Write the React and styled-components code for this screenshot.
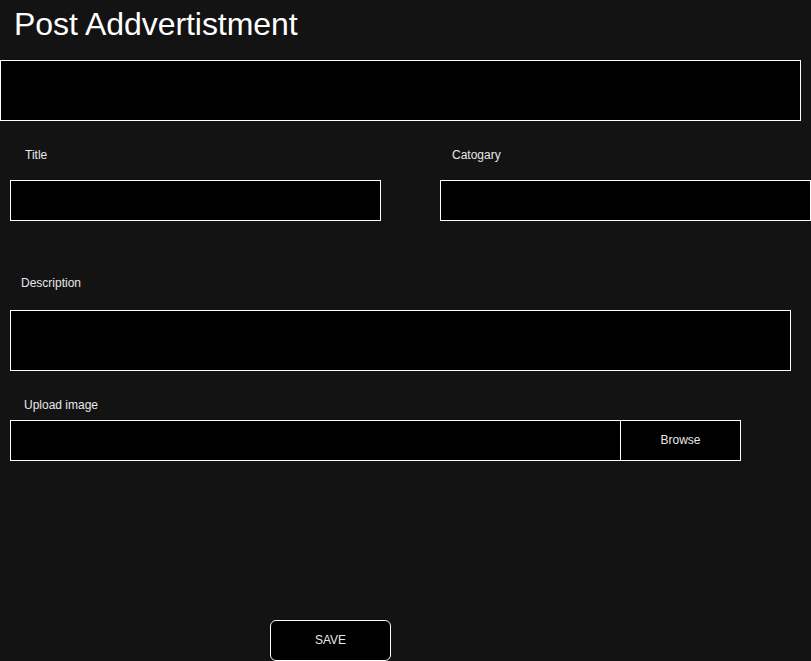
import React from "react";
import styled, { createGlobalStyle } from "styled-components";

const Global = createGlobalStyle`
  html, body {
    margin: 0;
    padding: 0;
    background: #131313;
  }
  body {
    font-family: "Liberation Sans", Arial, sans-serif;
    color: #ffffff;
    overflow: hidden;
  }
  * { box-sizing: border-box; }
`;

const Page = styled.div`
  width: 811px;
  height: 661px;
  overflow: hidden;
  display: flex;
  flex-direction: column;
`;

const Heading = styled.h1`
  margin: 0;
  height: 60px;
  padding: 6px 0 0 14px;
  font-size: 32px;
  font-weight: 400;
  line-height: 37px;
  letter-spacing: -0.05px;
  color: #ffffff;
`;

const BigBox = styled.div`
  width: 801px;
  height: 61px;
  background: #000;
  border: 1px solid #ffffff;
`;

const Row = styled.div`
  display: flex;
  gap: 59px;
  padding-left: 10px;
  margin-top: ${(p) => p.$top}px;
`;

const Field = styled.div`
  display: flex;
  flex-direction: column;
  flex-shrink: 0;
`;

const Label = styled.label`
  font-size: 12px;
  line-height: 14px;
  color: #e8e8e8;
  padding-left: ${(p) => p.$indent}px;
  margin-bottom: ${(p) => p.$gap}px;
`;

const Input = styled.div`
  width: ${(p) => p.$w}px;
  height: ${(p) => p.$h}px;
  background: #000;
  border: 1px solid #ffffff;
`;

const FileRow = styled.div`
  display: flex;
`;

const BrowseButton = styled.div`
  width: 121px;
  height: 41px;
  margin-left: -1px;
  padding-bottom: 1px;
  background: #000;
  border: 1px solid #ffffff;
  display: flex;
  align-items: center;
  justify-content: center;
  font-size: 12px;
  color: #e8e8e8;
`;

const Footer = styled.div`
  margin-top: auto;
  padding-left: 270px;
`;

const SaveButton = styled.button`
  width: 121px;
  height: 41px;
  background: #000;
  border: 1px solid #ffffff;
  border-radius: 6px;
  color: #e8e8e8;
  font-family: "Liberation Sans", Arial, sans-serif;
  font-size: 12px;
  padding: 0 0 2px 0;
  display: flex;
  align-items: center;
  justify-content: center;
`;

export default function App() {
  return (
    <Page>
      <Global />
      <Heading>Post Addvertistment</Heading>
      <BigBox />
      <Row $top={27}>
        <Field>
          <Label $indent={15} $gap={18}>Title</Label>
          <Input $w={371} $h={41} />
        </Field>
        <Field>
          <Label $indent={12} $gap={18}>Catogary</Label>
          <Input $w={371} $h={41} />
        </Field>
      </Row>
      <Row $top={55}>
        <Field>
          <Label $indent={11} $gap={20}>Description</Label>
          <Input $w={781} $h={61} />
        </Field>
      </Row>
      <Row $top={27}>
        <Field>
          <Label $indent={14} $gap={8}>Upload image</Label>
          <FileRow>
            <Input $w={611} $h={41} />
            <BrowseButton>Browse</BrowseButton>
          </FileRow>
        </Field>
      </Row>
      <Footer>
        <SaveButton>SAVE</SaveButton>
      </Footer>
    </Page>
  );
}
